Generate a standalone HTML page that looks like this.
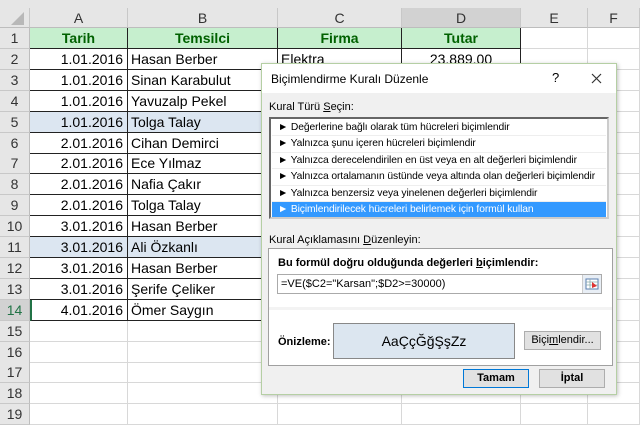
<!DOCTYPE html>
<html><head><meta charset="utf-8"><style>
*{box-sizing:border-box;margin:0;padding:0}
body{width:640px;height:415px;overflow:hidden;background:#fff;font-family:"Liberation Sans",sans-serif;position:relative}
.top{position:absolute;left:0;top:0;width:640px;height:8px;background:#e6e6e6}
.hdr{position:absolute;top:8px;height:20px;background:#e6e6e6;border-right:1px solid #c8c8c8;border-bottom:1px solid #bdbdbd;font-size:14px;color:#333;text-align:center;line-height:20px}
.row{position:absolute;left:0;width:640px;height:21px;display:flex}
.row div{height:100%;border-right:1px solid #d8d8d8;border-bottom:1px solid #d8d8d8;font-size:14px;line-height:20px;white-space:nowrap;overflow:hidden;color:#000}
.rh{width:30px;background:#e6e6e6;text-align:center;color:#333!important;border-right:1px solid #bdbdbd!important;border-bottom:1px solid #c8c8c8!important}
.a{width:98px;text-align:right;padding-right:4px}
.b{width:150px;padding-left:3px}
.c{width:124px;padding-left:3px}
.d{width:119px;text-align:center}
.e{width:67px}.f{width:52px}
.dat .a,.dat .b,.dat .c,.dat .d{border-right:1px solid #222!important;border-bottom:1px solid #222!important}
.h1 .a,.h1 .b,.h1 .c,.h1 .d{background:#c6efce;color:#006100;font-weight:bold;text-align:center;padding:0}
.bl .a,.bl .b,.bl .c,.bl .d{background:#dce6f1}
.dlg{position:absolute;left:261px;top:63px;width:356px;height:332px;background:#f0f0f0;border:1px solid #b5cfa4;box-shadow:1px 1px 4px rgba(0,0,0,.25);font-size:11px;color:#000}
.tb{height:29px;background:#fff;position:relative}
.tb span{position:absolute;top:8px;font-size:12px}
.lbl{position:absolute;font-size:11px;white-space:nowrap}
.list{position:absolute;left:7px;top:53px;width:340px;height:102px;background:#fff;border:2px solid #828790;border-color:#666 #ccc #ccc #666;padding:1px;overflow:hidden}
.it{height:16.4px;line-height:16px;padding-left:6px;border-bottom:1px solid #eee;font-size:10.3px;white-space:nowrap;overflow:hidden;letter-spacing:-0.1px}
.sel{background:#3399ff;color:#fff}
.box{position:absolute;left:6px;top:184px;width:345px;height:118px;background:#fff;border:1px solid #a0a0a0}
.btn{position:absolute;height:19px;background:#e1e1e1;border:1px solid #adadad;text-align:center;line-height:17px;font-size:11px}
</style></head><body>
<div class="top"></div>
<div class="hdr" style="left:0;width:30px"><svg width="30" height="20"><polygon points="24,4 24,17 11,17" fill="#b8b8b8"/></svg></div>
<div class="hdr" style="left:30px;width:98px">A</div>
<div class="hdr" style="left:128px;width:150px">B</div>
<div class="hdr" style="left:278px;width:124px">C</div>
<div class="hdr" style="left:402px;width:119px;background:#d2d2d2">D</div>
<div class="hdr" style="left:521px;width:67px">E</div>
<div class="hdr" style="left:588px;width:52px">F</div>

<div class="row dat h1" style="top:28px"><div class="rh">1</div><div class="a">Tarih</div><div class="b">Temsilci</div><div class="c">Firma</div><div class="d">Tutar</div><div class="e"></div><div class="f"></div></div>
<div class="row dat" style="top:48.9px"><div class="rh">2</div><div class="a">1.01.2016</div><div class="b">Hasan Berber</div><div class="c">Elektra</div><div class="d">23.889,00</div><div class="e"></div><div class="f"></div></div>
<div class="row dat" style="top:69.8px"><div class="rh">3</div><div class="a">1.01.2016</div><div class="b">Sinan Karabulut</div><div class="c"></div><div class="d"></div><div class="e"></div><div class="f"></div></div>
<div class="row dat" style="top:90.7px"><div class="rh">4</div><div class="a">1.01.2016</div><div class="b">Yavuzalp Pekel</div><div class="c"></div><div class="d"></div><div class="e"></div><div class="f"></div></div>
<div class="row dat bl" style="top:111.6px"><div class="rh">5</div><div class="a">1.01.2016</div><div class="b">Tolga Talay</div><div class="c"></div><div class="d"></div><div class="e"></div><div class="f"></div></div>
<div class="row dat" style="top:132.5px"><div class="rh">6</div><div class="a">2.01.2016</div><div class="b">Cihan Demirci</div><div class="c"></div><div class="d"></div><div class="e"></div><div class="f"></div></div>
<div class="row dat" style="top:153.4px"><div class="rh">7</div><div class="a">2.01.2016</div><div class="b">Ece Yılmaz</div><div class="c"></div><div class="d"></div><div class="e"></div><div class="f"></div></div>
<div class="row dat" style="top:174.3px"><div class="rh">8</div><div class="a">2.01.2016</div><div class="b">Nafia Çakır</div><div class="c"></div><div class="d"></div><div class="e"></div><div class="f"></div></div>
<div class="row dat" style="top:195.2px"><div class="rh">9</div><div class="a">2.01.2016</div><div class="b">Tolga Talay</div><div class="c"></div><div class="d"></div><div class="e"></div><div class="f"></div></div>
<div class="row dat" style="top:216.1px"><div class="rh">10</div><div class="a">3.01.2016</div><div class="b">Hasan Berber</div><div class="c"></div><div class="d"></div><div class="e"></div><div class="f"></div></div>
<div class="row dat bl" style="top:237px"><div class="rh">11</div><div class="a">3.01.2016</div><div class="b">Ali Özkanlı</div><div class="c"></div><div class="d"></div><div class="e"></div><div class="f"></div></div>
<div class="row dat" style="top:257.9px"><div class="rh">12</div><div class="a">3.01.2016</div><div class="b">Hasan Berber</div><div class="c"></div><div class="d"></div><div class="e"></div><div class="f"></div></div>
<div class="row dat" style="top:278.8px"><div class="rh">13</div><div class="a">3.01.2016</div><div class="b">Şerife Çeliker</div><div class="c"></div><div class="d"></div><div class="e"></div><div class="f"></div></div>
<div class="row dat" style="top:299.7px"><div class="rh" style="background:#d2d2d2;color:#217346!important">14</div><div class="a" style="border-left:2px solid #217346">4.01.2016</div><div class="b">Ömer Saygın</div><div class="c"></div><div class="d"></div><div class="e"></div><div class="f"></div></div>
<div class="row" style="top:320.6px"><div class="rh">15</div><div class="a"></div><div class="b"></div><div class="c"></div><div class="d"></div><div class="e"></div><div class="f"></div></div>
<div class="row" style="top:341.5px"><div class="rh">16</div><div class="a"></div><div class="b"></div><div class="c"></div><div class="d"></div><div class="e"></div><div class="f"></div></div>
<div class="row" style="top:362.4px"><div class="rh">17</div><div class="a"></div><div class="b"></div><div class="c"></div><div class="d"></div><div class="e"></div><div class="f"></div></div>
<div class="row" style="top:383.3px"><div class="rh">18</div><div class="a"></div><div class="b"></div><div class="c"></div><div class="d"></div><div class="e"></div><div class="f"></div></div>
<div class="row" style="top:404.2px"><div class="rh">19</div><div class="a"></div><div class="b"></div><div class="c"></div><div class="d"></div><div class="e"></div><div class="f"></div></div>

<div class="dlg">
 <div class="tb"><span style="left:9px">Biçimlendirme Kuralı Düzenle</span><span style="left:290px;font-size:13px;top:6px">?</span>
 <svg style="position:absolute;left:329px;top:9px" width="11" height="11"><path d="M1,1L10,10M10,1L1,10" stroke="#333" stroke-width="1.2"/></svg></div>
 <div class="lbl" style="left:7px;top:37px">Kural Türü <u>S</u>eçin:</div>
 <div class="list">
  <div class="it">► Değerlerine bağlı olarak tüm hücreleri biçimlendir</div>
  <div class="it">► Yalnızca şunu içeren hücreleri biçimlendir</div>
  <div class="it">► Yalnızca derecelendirilen en üst veya en alt değerleri biçimlendir</div>
  <div class="it">► Yalnızca ortalamanın üstünde veya altında olan değerleri biçimlendir</div>
  <div class="it">► Yalnızca benzersiz veya yinelenen değerleri biçimlendir</div>
  <div class="it sel">► Biçimlendirilecek hücreleri belirlemek için formül kullan</div>
 </div>
 <div class="lbl" style="left:7px;top:170px">Kural Açıklamasını <u>D</u>üzenleyin:</div>
 <div class="box">
  <div class="lbl" style="left:9px;top:8px;font-weight:bold">Bu formül doğru olduğunda değerleri <u>b</u>içimlendir:</div>
  <div style="position:absolute;left:8px;top:25px;width:325px;height:20px;border:1px solid #aaa;background:#fff;font-size:11px;line-height:18px;padding-left:3px">=VE($C2="Karsan";$D2&gt;=30000)
   <div style="position:absolute;right:0;top:0;width:19px;height:18px;background:#e8eef5;border-left:1px solid #ccc"><svg width="18" height="18"><rect x="3" y="4" width="12" height="10" fill="#fff" stroke="#5a7fb0"/><path d="M3,7H15M3,10H15M7,4V14" stroke="#8aa" stroke-width=".8"/><path d="M9,7l5,4-5,2z" fill="#d33"/></svg></div></div>
  <div style="position:absolute;left:0;top:58px;width:343px;height:3px;background:#f3f3f3"></div>
  <div class="lbl" style="left:9px;top:87px;font-weight:bold">Önizleme:</div>
  <div style="position:absolute;left:64px;top:74px;width:182px;height:36px;background:#dce6f0;border:1px solid #888;text-align:center;line-height:34px;font-size:14px">AaÇçĞğŞşZz</div>
  <div class="btn" style="left:255px;top:82px;width:77px">Biçi<u>m</u>lendir...</div>
 </div>
 <div class="btn" style="left:201px;top:305px;width:66px;border:1px solid #0078d7;font-weight:bold">Tamam</div>
 <div class="btn" style="left:277px;top:305px;width:66px;font-weight:bold">İptal</div>
</div>
</body></html>
